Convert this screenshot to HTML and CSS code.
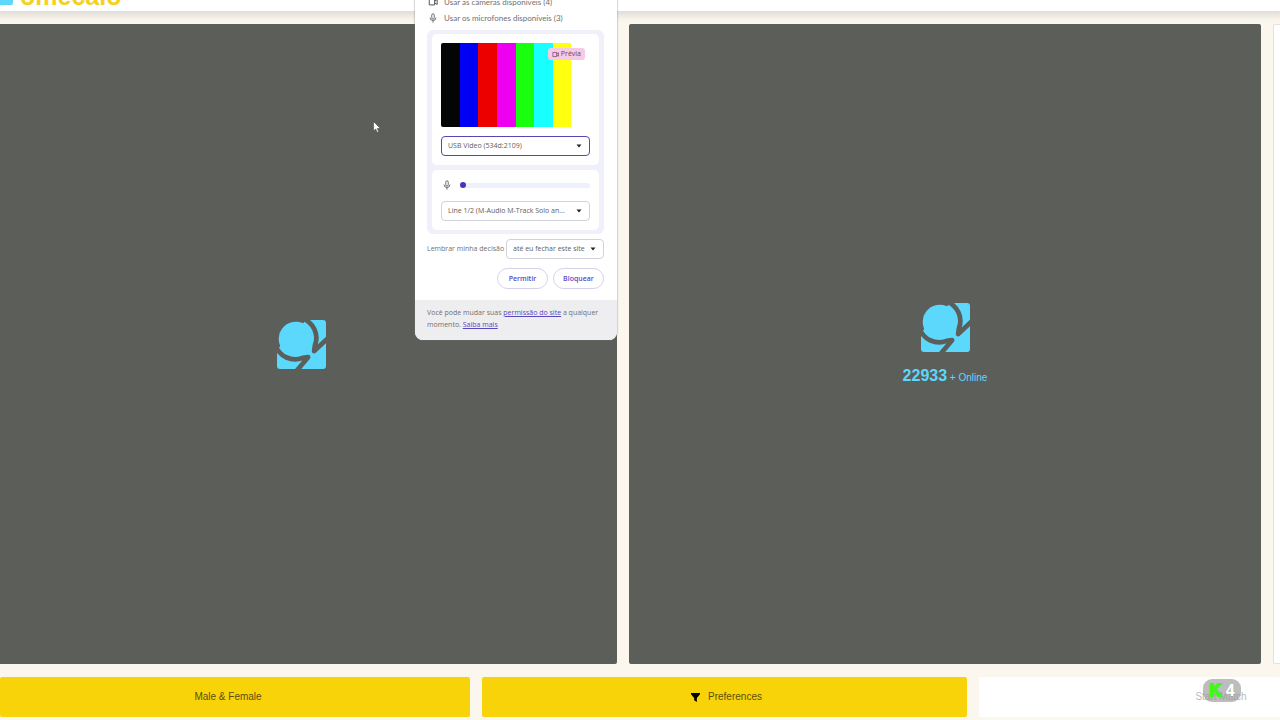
FILE: index.html
```html
<!DOCTYPE html>
<html lang="pt-BR">
<head>
<meta charset="utf-8">
<title>Video chat</title>
<link rel="stylesheet" href="styles.css">
</head>
<body>
<svg width="0" height="0" class="defs" aria-hidden="true">
  <symbol id="brand" viewBox="0 0 145 145">
    <rect width="145" height="145" rx="9" fill="#5cd8fd"/>
    <path d="M-1-1H88L-1 88Z" fill="#5c5e5a"/>
    <circle cx="56" cy="56" r="51" fill="#5cd8fd"/>
    <path d="M-4 76A61 61 0 0 0 76 112L92 110L56 153M76-4A61 61 0 0 1 112 76L110 92L153 52" fill="none" stroke="#5c5e5a" stroke-width="14" stroke-linejoin="round"/>
  </symbol>
  <symbol id="mic" viewBox="0 0 12 12">
    <path d="M4.5 2.5a1.5 1.5 0 0 1 3 0v3.300a1.500 1.500 0 0 1-3 0zM2.500 5.500a3.500 3.500 0 0 0 7 0M6 9v2.500" fill="none" stroke="currentColor"/>
  </symbol>
  <symbol id="camera" viewBox="0 0 12 12">
    <path d="M1.500 2.500h6.500v7h-6.500zM8 5l3-2v6l-3-2" fill="none" stroke="currentColor" stroke-width="1.200" stroke-linejoin="round"/>
  </symbol>
</svg>
<div class="page">
  <header class="topbar"><span class="topbar-mark"></span><span class="topbar-name">omecalo</span></header>
  <main class="stage">
    <section class="video video-local"><svg class="brand"><use href="#brand"/></svg></section>
    <section class="video video-remote">
      <svg class="brand"><use href="#brand"/></svg>
      <p class="online"><strong>22933</strong> + Online</p>
    </section>
    <aside class="chat"></aside>
  </main>
  <footer class="actions">
    <button class="action action-gender">Male &amp; Female</button>
    <button class="action action-filter"><svg class="filter" viewBox="0 0 10 10"><path d="M0 0H10V1.500L6.500 5.500V10L3.500 8V5.500L0 1.500Z"/></svg>Preferences</button>
    <button class="action action-start">Start Match</button>
  </footer>
</div>

<div class="dialog" role="dialog" aria-label="Permissões">
  <div class="dialog-body">
    <p class="device"><svg class="icon"><use href="#camera"/></svg>Usar as câmeras disponíveis (4)</p>
    <p class="device"><svg class="icon"><use href="#mic"/></svg>Usar os microfones disponíveis (3)</p>
    <div class="sources">
      <div class="source">
        <div class="preview">
          <i class="bar black"></i><i class="bar blue"></i><i class="bar red"></i><i class="bar magenta"></i><i class="bar green"></i><i class="bar cyan"></i><i class="bar yellow"></i><i class="bar white"></i>
          <span class="badge"><svg class="badge-icon"><use href="#camera"/></svg>Prévia</span>
        </div>
        <select class="select select-focus" aria-label="Câmera"><option>USB Video (534d:2109)</option></select>
      </div>
      <div class="source">
        <div class="level"><svg class="icon"><use href="#mic"/></svg><span class="track"><span class="dot"></span></span></div>
        <select class="select" aria-label="Microfone"><option>Line 1/2 (M-Audio M-Track Solo an...</option></select>
      </div>
    </div>
    <div class="remember">
      <label for="remember">Lembrar minha decisão</label>
      <select class="select select-remember" id="remember"><option>até eu fechar este site</option></select>
    </div>
    <div class="choices"><button class="choice">Permitir</button><button class="choice">Bloquear</button></div>
  </div>
  <p class="dialog-note">Você pode mudar suas <a href="#">permissão do site</a> a qualquer momento. <a href="#">Saiba mais</a></p>
</div>

<svg class="cursor" viewBox="0 0 8 12"><path d="M.5.5V10L2.700 8L4.200 11.500L5.700 10.800L4.300 7.500H7.500Z" fill="#fff" stroke="#444" stroke-width=".6"/></svg>
<div class="keys"><span class="keys-k">K</span><span>4</span></div>
</body>
</html>
```
FILE: styles.css
```css
* { box-sizing: border-box; }
body {
  margin: 0;
  height: 100vh;
  overflow: hidden;
  background: #fbf7ee;
  font-family: "Liberation Sans", Arial, sans-serif;
}
p { margin: 0; }
.defs { position: absolute; }
.page { display: flex; flex-direction: column; height: 100vh; }

.topbar {
  display: flex;
  align-items: flex-end;
  gap: 7px;
  height: 11px;
  flex: none;
  background: #fff;
  box-shadow: 0 1px 6px 4px #e0ddd8;
}
.topbar-mark { width: 13px; height: 5px; margin-bottom: 6px; background: #5cd8fd; border-radius: 0 0 2px 0; }
.topbar-name { color: #f4d11c; font: bold 25px/28px "Liberation Sans", Arial, sans-serif; margin-bottom: 1px; }

.stage {
  display: grid;
  grid-template-columns: 617fr 632fr 7px;
  gap: 12px;
  flex: 1;
  padding-top: 13px;
}
.video {
  display: flex;
  flex-direction: column;
  align-items: center;
  justify-content: center;
  background: #5c5e5a;
  border-radius: 2px;
}
.video-local { padding-right: 15px; border-radius: 0 2px 2px 0; }
.video-remote { padding-top: 4px; }
.brand { width: 49px; height: 49px; flex: none; }
.online { margin-top: 13px; color: #5cd8fd; font-size: 10px; line-height: 22px; }
.online strong { font-size: 16px; }
.chat { background: #fff; border: 1px solid #e5e2dc; border-right: 0; border-radius: 2px 0 0 2px; }

.actions {
  display: grid;
  grid-template-columns: 470fr 485fr 301fr;
  gap: 12px;
  flex: none;
  padding: 13px 0 3px;
}
.action {
  display: flex;
  align-items: center;
  justify-content: center;
  gap: 8px;
  height: 40px;
  padding: 0;
  border: 0;
  border-radius: 2px;
  background: #f8d30a;
  color: #5c4e08;
  font: 10px/16px "Liberation Sans", Arial, sans-serif;
}
.action-gender { padding-right: 14px; }
.action-filter { padding-left: 4px; }
.action-start { background: #fff; color: #bbb; padding-left: 183px; }
.filter { width: 9px; height: 9px; fill: #000; }

.dialog {
  position: absolute;
  top: -6px;
  left: 415px;
  width: 202px;
  overflow: hidden;
  border-radius: 0 0 8px 8px;
  background: #fff;
  box-shadow: 0 0 2px #777;
  color: #707070;
  font: 7px/12px "Open Sans", "Noto Sans", sans-serif;
}
.dialog-body { padding: 0 13px 11px 12px; }
.device { display: flex; align-items: center; gap: 6px; height: 16px; padding-left: 1px; font: 8px/12px Lato, sans-serif; }
.icon { width: 10px; height: 10px; color: #555; }
.sources {
  display: grid;
  gap: 5px;
  margin-top: 4px;
  padding: 4px 5px;
  border-radius: 6px;
  background: #f0f0fb;
}
.source { padding: 9px; border-radius: 5px; background: #fff; }
.preview { position: relative; display: flex; height: 84px; margin-bottom: 9px; border-radius: 2px; overflow: hidden; }
.bar { flex: 1; }
.black { background: #050505; }
.blue { background: #0000f5; }
.red { background: #ed0000; }
.magenta { background: #ed00f0; }
.green { background: #18ff10; }
.cyan { background: #18ffff; }
.yellow { background: #ffff10; }
.white { background: #fff; }
.badge {
  position: absolute;
  top: 5px;
  right: 5px;
  display: flex;
  align-items: center;
  gap: 2px;
  height: 12px;
  padding: 0 4px;
  border-radius: 3px;
  background: #f5cbe4;
  color: #713b69;
}
.badge-icon { width: 7px; height: 7px; }
.select {
  display: block;
  width: 100%;
  height: 20px;
  padding: 0 18px 0 6px;
  appearance: none;
  border: 1px solid #d2d2da;
  border-radius: 4px;
  background: #fff url("data:image/svg+xml,%3Csvg xmlns='http://www.w3.org/2000/svg' viewBox='0 0 6 4'%3E%3Cpath d='M.5.5h5L3 3.500z' fill='%23222'/%3E%3C/svg%3E") no-repeat right 7px center / 6px 4px;
  color: #606060;
  font: 7px/12px "Open Sans", "Noto Sans", sans-serif;
  white-space: nowrap;
}
.select-focus { border-color: #5548b5; }
.level { display: flex; align-items: center; gap: 8px; height: 12px; margin-bottom: 10px; padding-left: 1px; }
.track { display: flex; align-items: center; flex: 1; height: 5px; border-radius: 3px; background: #edf1fb; }
.dot { width: 6px; height: 6px; border-radius: 50%; background: #4a32bd; }
.remember { display: flex; align-items: center; justify-content: space-between; margin-top: 5px; }
.select-remember { width: 98px; }
.choices { display: flex; justify-content: flex-end; gap: 5px; margin-top: 9px; }
.choice {
  height: 21px;
  padding: 0;
  width: 51px;
  border: 1px solid #d5d0ea;
  border-radius: 11px;
  background: #fff;
  color: #5a48bf;
  font: 600 7px/12px "Open Sans", "Noto Sans", sans-serif;
}
.dialog-note { padding: 7px 12px 9px; background: #eeeef1; }
.dialog-note a { color: #5a48bf; }

.cursor { position: absolute; left: 373px; top: 121px; width: 8px; height: 12px; }
.keys {
  position: absolute;
  right: 39px;
  bottom: 18px;
  display: flex;
  align-items: center;
  justify-content: center;
  gap: 5px;
  width: 38px;
  height: 23px;
  border-radius: 9px;
  background: rgba(145, 145, 145, .6);
  color: #fff;
  font: bold 16px/20px "Liberation Sans", Arial, sans-serif;
}
.keys-k { color: #42f51b; -webkit-text-stroke: 2px #42f51b; }
```
